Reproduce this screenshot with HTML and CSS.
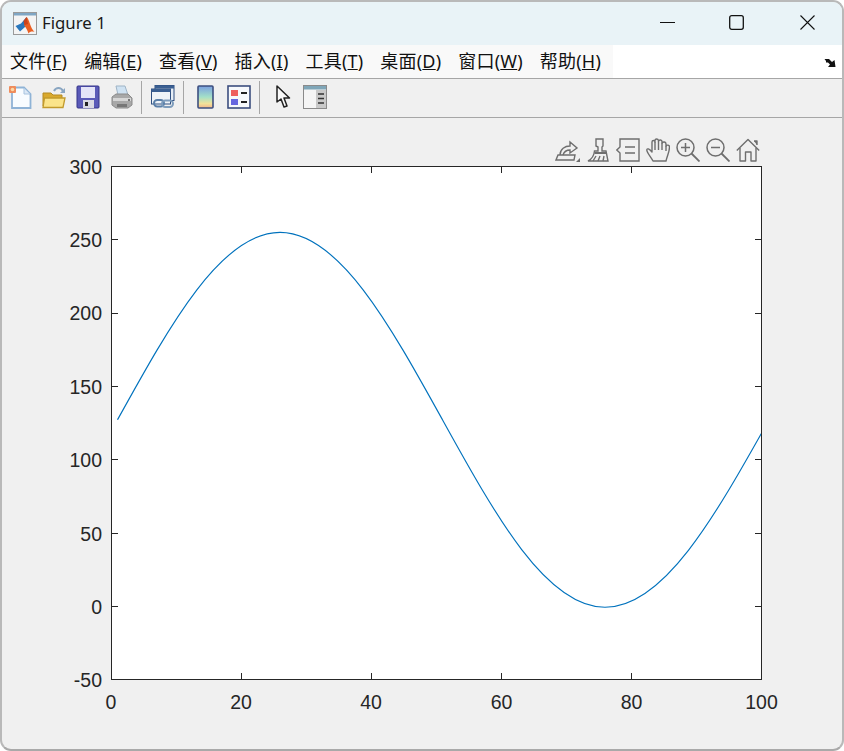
FILE: index.html
```html
<!DOCTYPE html>
<html lang="zh">
<head>
<meta charset="utf-8">
<title>Figure 1</title>
<link rel="stylesheet" href="styles.css">
</head>
<body>
<div class="window">
  <header class="titlebar">
    <svg class="app-icon" width="24" height="24" viewBox="0 0 24 24">
      <rect x="0.5" y="0.5" width="23" height="22" fill="#f4f4f4" stroke="#9a9a9a"/>
      <rect x="1" y="1" width="22" height="2.5" fill="#7fa6c4"/>
      <path d="M2.500 14 L8 11.500 L11 8 L13.500 5 L15 12 L12 15 L7 19.500 Z" fill="#2a78bd"/>
      <path d="M13.500 5 C15 6 16 9 17 12 C18 15 19.500 18 21.500 20 C19 19 17 19.500 15.500 21.500 C14.500 18 12.500 15 11 13 Z" fill="#ea5f22"/>
      <path d="M13.500 5 L15 12 L11.500 13 L10.500 9 Z" fill="#c9431c"/>
    </svg>
    <span class="title-text">Figure 1</span>
    <div class="window-controls">
      <svg class="ctl" width="15" height="15" viewBox="0 0 15 15"><path d="M0 7.500 H15" stroke="#111" fill="none"/></svg>
      <svg class="ctl" width="15" height="15" viewBox="0 0 15 15"><rect x="0.700" y="0.700" width="13.600" height="13.600" rx="2" stroke="#111" stroke-width="1.300" fill="none"/></svg>
      <svg class="ctl close" width="15" height="15" viewBox="0 0 15 15"><path d="M0.500 0.500 L14.500 14.500 M14.500 0.500 L0.500 14.500" stroke="#111" stroke-width="1.100" fill="none"/></svg>
    </div>
  </header>

  <nav class="menubar">
    <div class="menu-items">
      <span class="menu-item">文件(<u>F</u>)</span>
      <span class="menu-item">编辑(<u>E</u>)</span>
      <span class="menu-item">查看(<u>V</u>)</span>
      <span class="menu-item">插入(<u>I</u>)</span>
      <span class="menu-item">工具(<u>T</u>)</span>
      <span class="menu-item">桌面(<u>D</u>)</span>
      <span class="menu-item">窗口(<u>W</u>)</span>
      <span class="menu-item">帮助(<u>H</u>)</span>
    </div>
    <svg class="dock-arrow" width="12" height="10" viewBox="0 0 12 10">
      <path d="M0.500 1 H5 L8 4 L10.500 2 L11.500 9 H4 L6 6.500 L4 4.500 H2 V3 Z" fill="#111"/>
    </svg>
  </nav>

  <div class="toolbar">
    <div class="tool-group first">
      <span class="tool">
        <svg width="24" height="24" viewBox="0 0 24 24">
          <path d="M4 2.500 H16 L22.500 9 V23 H4 Z" fill="#f8fcff" stroke="#8fb3d6" stroke-width="1.800"/>
          <path d="M16 3 V9 H22" fill="#dbe8f5" stroke="#a8c4e0"/>
          <rect x="1" y="1" width="7" height="7" rx="1" fill="#ef8c5c"/>
          <circle cx="4.500" cy="4.500" r="1.800" fill="#fbd9a6"/>
        </svg>
      </span>
      <span class="tool">
        <svg width="24" height="24" viewBox="0 0 24 24">
          <path d="M1 21 V8 H9 L11 10 H20 V21 Z" fill="#d9a92d" stroke="#b58a22"/>
          <path d="M1 22.500 L2.500 13 H23 L21 22.500 Z" fill="#fbe48a" stroke="#c29a2c" stroke-width="1.300"/>
          <path d="M12 6 C14 2 19 2 21 6" stroke="#8aa6c2" stroke-width="2" fill="none"/>
          <path d="M23 3 V8 H18 Z" fill="#8aa6c2"/>
        </svg>
      </span>
      <span class="tool">
        <svg width="24" height="24" viewBox="0 0 24 24">
          <rect x="1" y="1" width="22" height="22" rx="1" fill="#5a5ab8" stroke="#35358a"/>
          <rect x="5" y="2" width="14" height="11" fill="#e4e4f8"/>
          <rect x="7" y="15" width="11" height="8" fill="#d9d9e4"/>
          <rect x="9" y="17" width="3" height="4" fill="#222"/>
        </svg>
      </span>
      <span class="tool">
        <svg width="24" height="24" viewBox="0 0 24 24">
          <path d="M6 1 H15 L18 10 H8 Z" fill="#cfe2f2" stroke="#9fb4c6"/>
          <path d="M2 12 L6 9 H18 L22 13 V20 L18 23 H6 L2 20 Z" fill="#a8a8a8" stroke="#8a8a8a"/>
          <path d="M3 13 H21 V16 H3 Z" fill="#d6d6d6"/>
          <path d="M7 19 H17 V22 H7 Z" fill="#777"/>
          <circle cx="19" cy="15" r="1" fill="#555"/>
        </svg>
      </span>
    </div>
    <span class="sep"></span>
    <div class="tool-group">
      <span class="tool">
        <svg width="24" height="24" viewBox="0 0 24 24">
          <rect x="4" y="0.5" width="19" height="15" fill="#e7eef6" stroke="#2f4f80"/>
          <rect x="4" y="0.5" width="19" height="3" fill="#3a5f92"/>
          <rect x="0.5" y="4" width="19" height="15" fill="#eef3f8" stroke="#2f4f80"/>
          <rect x="0.5" y="4" width="19" height="3" fill="#3a5f92"/>
          <rect x="3" y="15" width="10" height="6.5" rx="3.2" fill="none" stroke="#5a7fa8" stroke-width="2"/>
          <rect x="11" y="15.500" width="11" height="6.5" rx="3.2" fill="none" stroke="#7d9cbc" stroke-width="2"/>
        </svg>
      </span>
    </div>
    <span class="sep"></span>
    <div class="tool-group">
      <span class="tool">
        <svg width="17" height="24" viewBox="0 0 17 24">
          <defs>
            <linearGradient id="cbar" x1="0" y1="0" x2="0" y2="1">
              <stop offset="0" stop-color="#7a9fe0"/>
              <stop offset="0.5" stop-color="#a3e0c8"/>
              <stop offset="0.8" stop-color="#f2e29a"/>
              <stop offset="1" stop-color="#f2b48a"/>
            </linearGradient>
          </defs>
          <rect x="1" y="1" width="15" height="22" rx="1" fill="url(#cbar)" stroke="#3d4f7f" stroke-width="1.6"/>
        </svg>
      </span>
      <span class="tool">
        <svg width="24" height="24" viewBox="0 0 24 24">
          <rect x="1" y="1" width="22" height="22" fill="#f7f9fc" stroke="#3d4f7f" stroke-width="1.6"/>
          <rect x="4" y="5" width="7" height="6" fill="#ee5f5f"/>
          <rect x="4" y="14" width="7" height="6" fill="#6767e0"/>
          <path d="M14 8 H20 M14 17 H20" stroke="#222" stroke-width="1.8"/>
        </svg>
      </span>
    </div>
    <span class="sep"></span>
    <div class="tool-group last">
      <span class="tool">
        <svg width="16" height="24" viewBox="0 0 16 24">
          <path d="M2 1 L2 17 L6 14 L9 22 L12 21 L9 13 L14.500 13 Z" fill="#fafafa" stroke="#222" stroke-width="1.5" stroke-linejoin="round"/>
        </svg>
      </span>
      <span class="tool narrow">
        <svg width="24" height="24" viewBox="0 0 24 24">
          <rect x="0.500" y="0.500" width="23" height="23" fill="#f5f5f5" stroke="#8a8a8a"/>
          <rect x="1" y="1" width="22" height="3.500" fill="#7fa6b8"/>
          <rect x="13" y="5" width="10" height="18" fill="#c9c9c9"/>
          <path d="M15 9 H21 M15 13.500 H21 M15 18 H21" stroke="#333" stroke-width="1.600"/>
        </svg>
      </span>
    </div>
  </div>

  <main class="figure">
    <div class="axes-toolbar">
      <svg width="25" height="24" viewBox="0 0 25 24" fill="none" stroke="#6e6e6e" stroke-width="1.400">
        <path d="M1 22 H19 L20 17 H3 Z"/>
        <path d="M5 17 C5 11 10 8 15 8 V4 L22 10 L15 15 V12 C12 12 9 14 8 17"/>
        <path d="M25 24 H21 L25 20 Z" fill="#6e6e6e" stroke="none"/>
      </svg>
      <svg width="24" height="24" viewBox="0 0 24 24" fill="none" stroke="#6e6e6e" stroke-width="1.400">
        <path d="M10 1 H17 V8 L16 9 V13 H20 L22 23 H2 C6 21 8 18 8.500 13 H12 V9 L10 8 Z"/>
        <path d="M8.500 15 H20.500" stroke-width="2"/>
        <path d="M7 23 L10 18 M12 23 L14 18 M17 23 L18 18"/>
      </svg>
      <svg width="24" height="24" viewBox="0 0 24 24" fill="none" stroke="#6e6e6e" stroke-width="1.400">
        <path d="M4 1 H23 V23 H4 V15 L0.800 12 L4 9 Z"/>
        <path d="M9 9 H19 M9 15 H19"/>
      </svg>
      <svg width="24" height="24" viewBox="0 0 24 24" fill="none" stroke="#6e6e6e" stroke-width="1.400" stroke-linejoin="round">
        <path d="M7 23 C5 19 1 15 0.800 12 C1 10 3 10.500 6 14 V4 C6 2 9 2 9 4 V2.500 C9 0.500 12 0.500 12.500 2.500 V3 C13 1.500 16 1.500 16 3.500 V5 C17 3.500 20 3.500 20 6 V8 C21 6.500 23.500 7 23.500 9 C23.500 14 21 18 20 23 Z"/>
        <path d="M9 4 V12 M12.500 3 V12 M16 5 V12 M20 8 V13"/>
      </svg>
      <svg width="24" height="24" viewBox="0 0 24 24" fill="none" stroke="#6e6e6e" stroke-width="1.500">
        <circle cx="9.500" cy="9.500" r="8.500"/>
        <path d="M5 9.500 H14 M9.500 5 V14"/>
        <path d="M15.500 15.500 L23.500 23.500" stroke-width="1.800"/>
      </svg>
      <svg width="24" height="24" viewBox="0 0 24 24" fill="none" stroke="#6e6e6e" stroke-width="1.500">
        <circle cx="9.500" cy="9.500" r="8.500"/>
        <path d="M5 9.500 H14"/>
        <path d="M15.500 15.500 L23.500 23.500" stroke-width="1.800"/>
      </svg>
      <svg width="24" height="24" viewBox="0 0 24 24" fill="none" stroke="#6e6e6e" stroke-width="1.400" stroke-linejoin="round">
        <path d="M0.800 12.500 L12 1.500 L23.200 12.500"/>
        <path d="M4 10 V23 H9.500 V14 H15 V23 H20 V10"/>
        <path d="M18 3 H21 V7" fill="#6e6e6e"/>
      </svg>
    </div>

    <svg class="plot" width="840" height="631" viewBox="2 118 840 631">
      <defs>
        <clipPath id="plot-area"><rect x="111" y="166" width="650" height="513"/></clipPath>
      </defs>
      <rect class="axes-bg" x="111.500" y="166.500" width="650" height="513"/>
      <path class="line" clip-path="url(#plot-area)" d="M117.500 419.800 C170.500 324.100 221.200 232.400 280 232.400 C338.800 232.400 389.500 324.100 442.500 419.800 C495.500 515.500 546.200 607.200 605 607.200 C663.800 607.200 714.500 517 767.500 422.500"/>
      <path class="ticks" d="M241.500 166 v7 M371.500 166 v7 M501.500 166 v7 M631.500 166 v7
        M241.500 680 v-7 M371.500 680 v-7 M501.500 680 v-7 M631.500 680 v-7
        M111 239.500 h7 M111 313.500 h7 M111 386.500 h7 M111 459.500 h7 M111 533.500 h7 M111 606.500 h7
        M762 239.500 h-7 M762 313.500 h-7 M762 386.500 h-7 M762 459.500 h-7 M762 533.500 h-7 M762 606.500 h-7"/>
      <g class="ylabels">
        <text x="102" y="174">300</text>
        <text x="102" y="247">250</text>
        <text x="102" y="320">200</text>
        <text x="102" y="394">150</text>
        <text x="102" y="467">100</text>
        <text x="102" y="541">50</text>
        <text x="102" y="614">0</text>
        <text x="102" y="687">-50</text>
      </g>
      <g class="xlabels">
        <text x="111" y="709">0</text>
        <text x="241" y="709">20</text>
        <text x="371" y="709">40</text>
        <text x="501.500" y="709">60</text>
        <text x="631.500" y="709">80</text>
        <text x="761.500" y="709">100</text>
      </g>
    </svg>
  </main>
</div>
</body>
</html>
```

FILE: styles.css
```css
* {
  box-sizing: border-box;
}

html,
body {
  margin: 0;
  height: 100%;
  background: #ffffff;
  overflow: hidden;
}

.window {
  width: 844px;
  height: 751px;
  display: flex;
  flex-direction: column;
  background: #f0f0f0;
  border: 2px solid #b9b9b9;
  border-bottom-color: #a9a9a9;
  border-radius: 11px;
  overflow: hidden;
}

.titlebar {
  flex: 0 0 43px;
  display: flex;
  align-items: center;
  padding: 0 0 2px 11px;
  background: #e9f3f7;
}

.app-icon {
  flex: none;
  margin-top: 3px;
}

.title-text {
  margin-left: 5px;
  font: 16.800px/20px "Noto Sans", "Open Sans", sans-serif;
  color: #1a1a1a;
}

.window-controls {
  margin-left: auto;
  display: flex;
  gap: 54px;
  padding-right: 27px;
}

.close {
  margin-left: 2px;
}

.menubar {
  flex: 0 0 34px;
  display: flex;
  align-items: center;
  justify-content: space-between;
  background: #ffffff;
  border-bottom: 1px solid #a6a6a6;
}

.menu-items {
  height: 100%;
  width: 611px;
  display: flex;
  align-items: center;
  padding: 0 0 2px 8px;
  background: #f9f9f9;
}

.menu-item {
  margin-right: 17px;
  font: 18px/24px "Noto Sans", "Noto Sans CJK SC", sans-serif;
  letter-spacing: 0.200px;
  color: #111111;
  white-space: nowrap;
}

.dock-arrow {
  margin: 2px 6px 0 0;
}

.toolbar {
  flex: 0 0 39px;
  display: flex;
  align-items: center;
  padding-bottom: 2px;
  background: #f0f0f0;
  border-bottom: 1px solid #a6a6a6;
}

.tool-group {
  display: flex;
  align-items: center;
}

.tool-group.first {
  padding-left: 1px;
  margin-right: -1px;
}

.tool-group.last {
  padding-left: 2px;
}

.tool {
  width: 34px;
  height: 24px;
  display: flex;
  justify-content: center;
}

.tool.narrow {
  width: 30px;
}

.sep {
  flex: none;
  width: 1px;
  height: 33px;
  margin: 0 4px 0 3px;
  background: #a6a6a6;
}

.figure {
  position: relative;
  flex: 1;
  min-height: 0;
}

.plot {
  display: block;
}

.axes-toolbar {
  position: absolute;
  top: 20px;
  left: 553px;
  display: flex;
  gap: 6px;
}

.axes-bg {
  fill: #ffffff;
  stroke: #262626;
  stroke-width: 1;
}

.line {
  fill: none;
  stroke: #0072bd;
  stroke-width: 1.150;
}

.ticks {
  fill: none;
  stroke: #262626;
  stroke-width: 1;
}

.ylabels text,
.xlabels text {
  font: 19.500px "Liberation Sans", Arial, sans-serif;
  fill: #262626;
}

.ylabels text {
  text-anchor: end;
}

.xlabels text {
  text-anchor: middle;
}
```
